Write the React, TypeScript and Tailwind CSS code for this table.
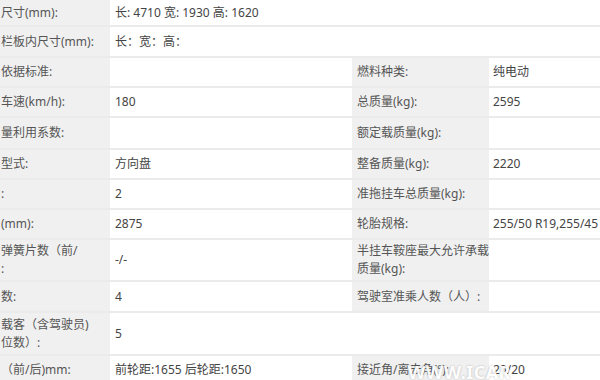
type Row = {
  h: string;
  l1: string;
  v1: string;
  l2?: string;
  v2?: string;
};

const rows: Row[] = [
  { h: "h-[27px]", l1: "尺寸(mm):", v1: "长: 4710 宽: 1930 高: 1620" },
  { h: "h-[31px]", l1: "栏板内尺寸(mm):", v1: "长：宽：高：" },
  { h: "h-[30px]", l1: "依据标准:", v1: "", l2: "燃料种类:", v2: "纯电动" },
  { h: "h-[30px]", l1: "车速(km/h):", v1: "180", l2: "总质量(kg):", v2: "2595" },
  { h: "h-[32px]", l1: "量利用系数:", v1: "", l2: "额定载质量(kg):", v2: "" },
  { h: "h-[30px]", l1: "型式:", v1: "方向盘", l2: "整备质量(kg):", v2: "2220" },
  { h: "h-[30px]", l1: ":", v1: "2", l2: "准拖挂车总质量(kg):", v2: "" },
  { h: "h-[30px]", l1: "(mm):", v1: "2875", l2: "轮胎规格:", v2: "255/50 R19,255/45 R20" },
  { h: "h-[42px]", l1: "弹簧片数（前/\n:", v1: "-/-", l2: "半挂车鞍座最大允许承载\n质量(kg):", v2: "" },
  { h: "h-[31px]", l1: "数:", v1: "4", l2: "驾驶室准乘人数（人）:", v2: "" },
  { h: "h-[43px]", l1: "载客（含驾驶员)\n位数）:", v1: "5" },
  { h: "h-[30px]", l1: "（前/后)mm:", v1: "前轮距:1655 后轮距:1650", l2: "接近角/离去角(°):", v2: "20/20" },
];

export default function App() {
  return (
    <div
      className="relative w-[600px] h-[380px] overflow-hidden bg-white text-[12px]"
      style={{ fontFamily: '"Noto Sans", "Noto Sans CJK SC", sans-serif' }}
    >
      {rows.map((r, i) => (
        <div key={i} className={`${r.h} flex border-b-2 border-[#ebebeb] last:border-b-0`}>
          <div className="w-[110px] shrink-0 flex items-center bg-[#f0f0f0] text-[#555] whitespace-pre leading-[18px] overflow-hidden">
            <span className="pl-[1px]">{r.l1}</span>
          </div>
          {r.l2 === undefined ? (
            <div className="flex-1 flex items-center pl-[5px] text-[#444] whitespace-pre">{r.v1}</div>
          ) : (
            <>
              <div className="w-[242px] shrink-0 flex items-center pl-[5px] text-[#444]">{r.v1}</div>
              <div className="w-[137px] shrink-0 flex items-center bg-[#f0f0f0] text-[#555] whitespace-pre leading-[18px] pl-[5px] overflow-hidden">
                {r.l2}
              </div>
              <div className="flex-1 flex items-center pl-[4px] text-[#444] whitespace-nowrap overflow-hidden">{r.v2}</div>
            </>
          )}
        </div>
      ))}
      <div className="absolute left-[408px] top-[359px] text-[18px] font-bold text-white tracking-wide [text-shadow:0_0_2px_rgba(0,0,0,0.3)] opacity-90">
        WWW.ICAR
      </div>
    </div>
  );
}
